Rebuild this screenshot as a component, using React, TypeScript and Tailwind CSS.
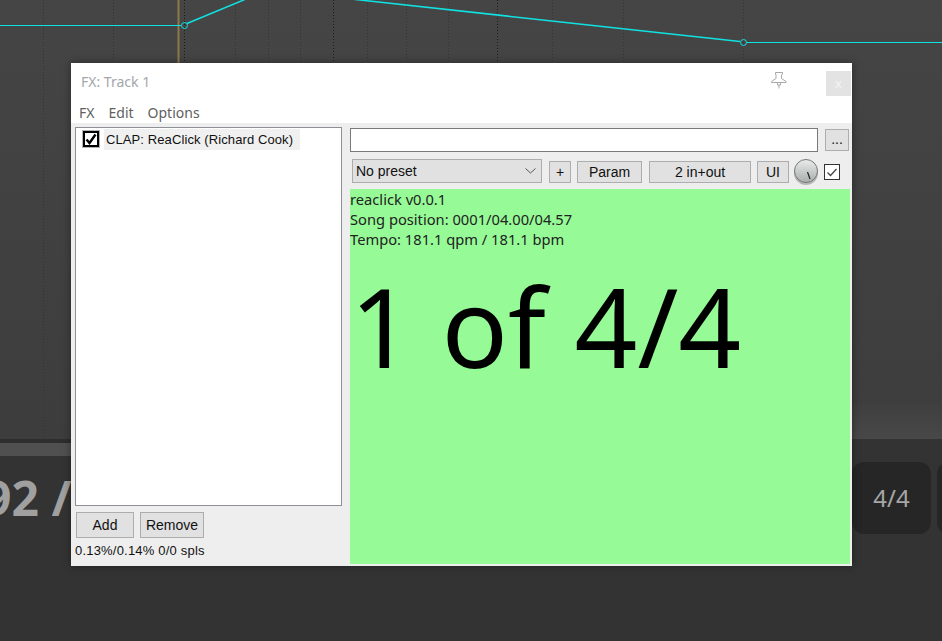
const gridLines = [
  { x: 43, dark: false },
  { x: 113, dark: false },
  { x: 184, dark: true },
  { x: 235, dark: false },
  { x: 268, dark: false },
  { x: 300, dark: false },
  { x: 333, dark: true },
  { x: 367, dark: false },
  { x: 406, dark: false },
  { x: 448, dark: false },
  { x: 497, dark: true },
  { x: 552, dark: false },
  { x: 623, dark: false },
  { x: 743, dark: false },
];

function Envelope() {
  return (
    <svg className="block h-[439px] w-[942px]" viewBox="0 0 942 439">
      {gridLines.map((l) => (
        <line
          key={l.x}
          x1={l.x + 0.5}
          x2={l.x + 0.5}
          y1={0}
          y2={437}
          stroke={l.dark ? '#1c1c1c' : '#333333'}
          strokeDasharray="1 2"
        />
      ))}
      <rect x={177.5} y={0} width={2} height={439} fill="#8c7a4a" />
      <path d="M0 25.5H181M746.5 42.5H942" fill="none" stroke="#10e2e2" />
      <path d="M187 23.5L246 -1M351 -1L740 41.5" fill="none" stroke="#10e2e2" strokeWidth={1.5} />
      <circle cx={184.5} cy={25.5} r={3} fill="none" stroke="#10e2e2" />
      <circle cx={743.5} cy={42.5} r={3} fill="none" stroke="#10e2e2" />
    </svg>
  );
}

function Btn({ className, children }: { className: string; children: React.ReactNode }) {
  return (
    <div className={`flex shrink-0 items-center justify-center border border-[#adadad] bg-[#e1e1e1] text-[14px] text-[#111] ${className}`}>
      {children}
    </div>
  );
}

function FxWindow() {
  return (
    <div className="absolute left-[71px] top-[63px] flex h-[503px] w-[781px] flex-col bg-[#eeeeee] font-['Liberation_Sans',sans-serif] shadow-[0_0_8px_rgba(0,0,0,0.4)]">
      <div className="h-[60px] bg-white">
        <div className="flex h-[40px] items-start">
          <div className="mt-[9px] ml-[10px] font-['Noto_Sans',sans-serif] text-[14px] leading-[20px] whitespace-nowrap text-[#a3a7ab]">FX: Track 1</div>
          <svg className="mt-[9px] ml-auto h-[17px] w-[16px] shrink-0" viewBox="0 0 16 17" fill="#fff" stroke="#a8a8a8">
            <path d="M4.5 .5H11.5V2L10.5 3V6.5L15 9.5V10.5H.5V9.5L5 6.5V3L4.5 2ZM6.5 10.5V13H9.5V10.5M8 13V16.5" />
          </svg>
          <div className="mt-[8px] mr-[1px] ml-[39px] flex h-[25px] w-[25px] shrink-0 items-center justify-center bg-[#e3e3e3] font-['Noto_Sans',sans-serif] text-[13px] text-[#f4f4f4]">x</div>
        </div>
        <div className="flex gap-[14px] pl-[8px] font-['Noto_Sans',sans-serif] text-[14px] leading-[20px] text-[#5f5f5f]">
          <span>FX</span>
          <span>Edit</span>
          <span>Options</span>
        </div>
      </div>

      <div className="flex flex-1 pt-[4px]">
        <div className="ml-[4px] flex w-[267px] flex-col">
          <div className="h-[379px] border border-[#8f8f98] bg-white pt-[1px] pl-[6px]">
            <div className="flex items-start">
              <div className="mt-[1px] flex h-[18px] w-[18px] items-center justify-center bg-[#b4b4b4]">
                <div className="flex h-[16px] w-[16px] items-center justify-center border-2 border-black bg-white">
                  <svg className="h-[12px] w-[12px]" viewBox="0 0 12 12" fill="none" stroke="#000" strokeWidth={2.4}>
                    <path d="M1.5 6.5L4.5 10L10.5 1.5" />
                  </svg>
                </div>
              </div>
              <div className="ml-[4px] h-[21px] w-[196px] bg-[#f0f0f0] pl-[2px] text-[13px] leading-[21px] tracking-[0.1px] whitespace-nowrap text-[#111]">CLAP: ReaClick (Richard Cook)</div>
            </div>
          </div>
          <div className="mt-[6px] ml-[1px] flex gap-[6px]">
            <Btn className="h-[26px] w-[58px]">Add</Btn>
            <Btn className="h-[26px] w-[64px]">Remove</Btn>
          </div>
          <div className="mt-[4px] text-[13px] leading-[18px] tracking-[0.2px] text-[#111]">0.13%/0.14% 0/0 spls</div>
        </div>

        <div className="ml-[8px] flex w-[500px] flex-col">
          <div className="flex items-start">
            <div className="mt-[1px] h-[24px] w-[468px] border border-[#7a7a7a] bg-white" />
            <Btn className="mt-[2px] ml-[7px] h-[22px] w-[24px] pb-[2px]">...</Btn>
          </div>
          <div className="mt-[6px] ml-[2px] flex h-[27px] items-start pt-0">
            <div className="mt-[1px] flex h-[24px] w-[190px] shrink-0 items-center justify-between border border-[#adadad] bg-[#e1e1e1] pr-[5px] pl-[3px] text-[14px] text-[#111]">
              <span>No preset</span>
              <svg className="h-[6px] w-[11px]" viewBox="0 0 11 6" fill="none" stroke="#555">
                <path d="M.5 .5L5.5 5L10.5 .5" />
              </svg>
            </div>
            <Btn className="mt-[3px] ml-[7px] h-[22px] w-[22px]">+</Btn>
            <Btn className="mt-[3px] ml-[6px] h-[22px] w-[65px]">Param</Btn>
            <Btn className="mt-[3px] ml-[7px] h-[22px] w-[102px]">2 in+out</Btn>
            <Btn className="mt-[3px] ml-[6px] h-[22px] w-[32px]">UI</Btn>
            <svg className="mt-[1px] ml-[5px] h-[27px] w-[24px] shrink-0" viewBox="0 0 24 27">
              <defs>
                <linearGradient id="knob" x1="0" y1="0" x2="0" y2="1">
                  <stop offset="0" stopColor="#e8eceb" />
                  <stop offset="1" stopColor="#a9adac" />
                </linearGradient>
              </defs>
              <circle cx={12} cy={14} r={12} fill="#b5b5b5" />
              <circle cx={12} cy={12} r={11.5} fill="url(#knob)" stroke="#777" />
              <line x1={13.5} y1={13} x2={16} y2={20} stroke="#222" strokeWidth={1.2} />
            </svg>
            <div className="mt-[6px] ml-[6px] flex h-[16px] w-[16px] shrink-0 items-center justify-center border border-[#333] bg-white">
              <svg className="h-[12px] w-[12px]" viewBox="0 0 12 12" fill="none" stroke="#444" strokeWidth={1.3}>
                <path d="M1.5 6.5L4.5 9.5L10.5 3" />
              </svg>
            </div>
          </div>
          <div className="mt-[4px] h-[375px] bg-[#96fb96] font-['Noto_Sans',sans-serif] text-[#222]">
            <div className="text-[14.7px] leading-[20px]">reaclick v0.0.1</div>
            <div className="text-[14.7px] leading-[20px]">Song position: 0001/04.00/04.57</div>
            <div className="text-[14.7px] leading-[20px]">Tempo: 181.1 qpm / 181.1 bpm</div>
            <div className="mt-[1px] text-[110px] leading-[150px] whitespace-nowrap text-black">1 of 4/4</div>
          </div>
        </div>
      </div>
    </div>
  );
}

export default function App() {
  return (
    <div className="relative h-[641px] w-[942px] overflow-hidden bg-[#333333] font-['Noto_Sans',sans-serif]">
      <div className="relative h-[439px] bg-gradient-to-b from-[#454545] to-[#3d3d3d]">
        <Envelope />
        <div className="absolute right-0 bottom-0 h-[36px] w-[90px] bg-gradient-to-b from-[#3f3f3f] to-[#484848]" />
      </div>
      <div className="h-[4px] w-[852px] bg-[#2e2e2e]" />
      <div className="h-[13px] w-[852px] bg-[#505050]" />
      <div className="flex items-start justify-between pt-[6px]">
        <div className="-ml-[16px] shrink-0 text-[48px] leading-[72px] font-bold text-[#a0a0a0]">92 /</div>
        <div className="-mr-[74px] flex shrink-0 gap-[6px]">
          <div className="flex h-[72px] w-[79px] shrink-0 items-center justify-center rounded-xl bg-[#262626] text-[24px] text-[#a6a6a6]">4/4</div>
          <div className="h-[72px] w-[79px] shrink-0 rounded-xl bg-[#262626]" />
        </div>
      </div>
      <FxWindow />
    </div>
  );
}
